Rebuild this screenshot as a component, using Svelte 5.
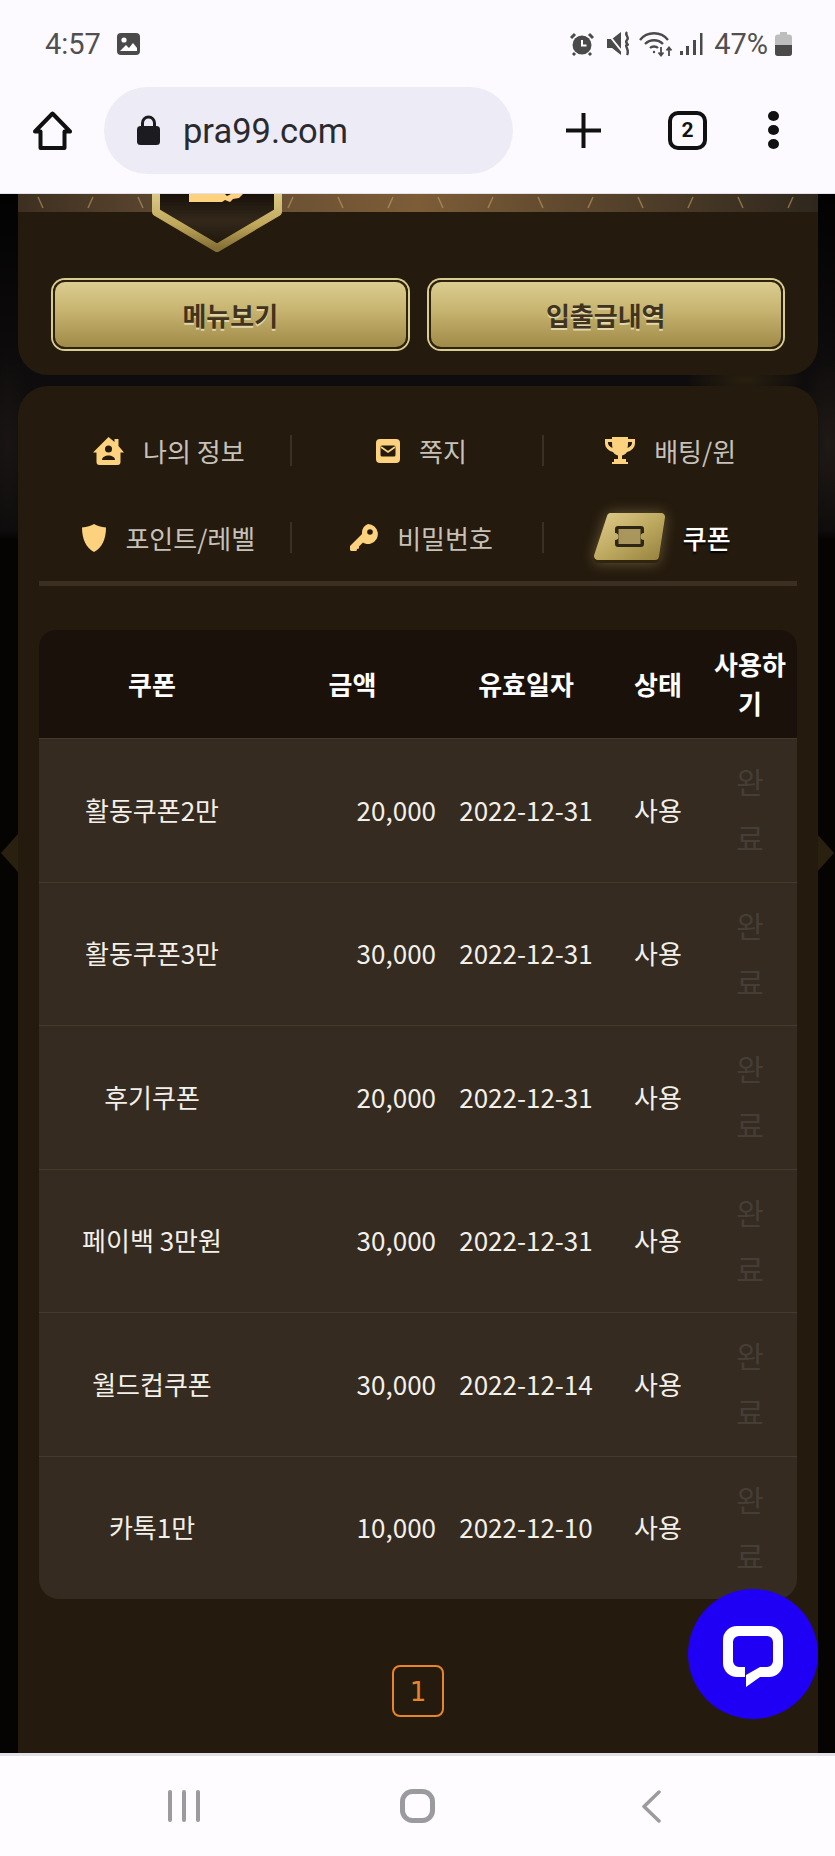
<script>
  const coupons = [
    { name: "활동쿠폰2만", amount: "20,000", date: "2022-12-31" },
    { name: "활동쿠폰3만", amount: "30,000", date: "2022-12-31" },
    { name: "후기쿠폰", amount: "20,000", date: "2022-12-31" },
    { name: "페이백 3만원", amount: "30,000", date: "2022-12-31" },
    { name: "월드컵쿠폰", amount: "30,000", date: "2022-12-14" },
    { name: "카톡1만", amount: "10,000", date: "2022-12-10" },
  ];
</script>

<div class="phone">
  <header class="status">
    <div class="status-left">
      <span>4:57</span>
      <svg width="23" height="22" viewBox="0 0 23 22">
        <rect width="23" height="22" rx="4" fill="#4a4a4a" />
        <circle cx="7" cy="7" r="2.6" fill="#fff" />
        <path d="M3 18l6-6 3 3 4-5 4 5v3H3z" fill="#fff" />
      </svg>
    </div>
    <div class="status-right">
      <svg width="24" height="24" viewBox="0 0 24 24">
        <circle cx="12" cy="13" r="9.500" fill="#4a4a4a" />
        <path d="M12 8v5.500h4.500" stroke="#fff" stroke-width="2" fill="none" />
        <path d="M1 6l4-4M23 6l-4-4M5 21l-2 2M19 21l2 2" stroke="#4a4a4a" stroke-width="3" />
      </svg>
      <svg width="25" height="25" viewBox="0 0 25 25">
        <path d="M0 8h5l9-7v23l-9-7H0z" fill="#4a4a4a" />
        <path d="M1 3l16 20" stroke="#fdfaff" stroke-width="2" />
        <path d="M20 1c-3 3 3 5 0 8s3 5 0 5 3 5 0 10" stroke="#4a4a4a" stroke-width="2.400" fill="none" />
      </svg>
      <svg width="34" height="26" viewBox="0 0 34 26" fill="none" stroke="#4a4a4a" stroke-width="2.300">
        <path d="M1 9c7-9 21-9 28 0" />
        <path d="M6 13c5-5 13-5 18 0" />
        <path d="M11 17c2-2 6-2 8 0" />
        <circle cx="15" cy="21" r="1.200" fill="#4a4a4a" stroke="none" />
        <path d="M22 16v8M19.500 21.500l2.500 3 2.500-3M30 25v-8M27.500 19.500l2.500-3 2.500 3" stroke-width="1.800" />
      </svg>
      <svg width="23" height="24" viewBox="0 0 23 24" fill="#4a4a4a">
        <rect x="0" y="19" width="3" height="4" />
        <rect x="6" y="14" width="3" height="9" />
        <rect x="13" y="8" width="3" height="15" />
        <rect x="20" y="1" width="2.500" height="22" />
      </svg>
      <span class="pct">47%</span>
      <svg width="17" height="24" viewBox="0 0 17 24">
        <path d="M5 0h7v2.500h2a3 3 0 0 1 3 3V21a3 3 0 0 1-3 3H3a3 3 0 0 1-3-3V5.500a3 3 0 0 1 3-3h2z" fill="#bdbdbd" />
        <path d="M0 13h17v8a3 3 0 0 1-3 3H3a3 3 0 0 1-3-3z" fill="#4a4a4a" />
      </svg>
    </div>
  </header>

  <nav class="toolbar">
    <svg class="home" width="39" height="39" viewBox="0 0 39 39" fill="none" stroke="#111" stroke-width="4" stroke-linejoin="round">
      <path d="M19.500 2.500L37 20.500h-5.500V37h-24V20.500H2z" />
    </svg>
    <div class="url">
      <svg width="23" height="30" viewBox="0 0 23 30">
        <path d="M5.500 13V8a6 6 0 0 1 12 0v5" fill="none" stroke="#1c1c20" stroke-width="3" />
        <rect y="11" width="23" height="19" rx="3.500" fill="#1c1c20" />
      </svg>
      <span>pra99.com</span>
    </div>
    <svg class="plus" width="35" height="35" viewBox="0 0 35 35">
      <path d="M17.500 0v35M0 17.500h35" stroke="#111" stroke-width="4" />
    </svg>
    <div class="tabs-count">2</div>
    <div class="dots"><i></i><i></i><i></i></div>
  </nav>

  <main class="content">
    <i class="arrow left"></i>
    <i class="arrow right"></i>

    <section class="panel top">
      <svg class="strip" width="800" height="18" viewBox="0 0 800 18" preserveAspectRatio="none">
        <defs>
          <linearGradient id="stripBg">
            <stop offset="0" stop-color="#3d2f20" />
            <stop offset="0.18" stop-color="#5c4630" />
            <stop offset="0.5" stop-color="#7d5d38" />
            <stop offset="0.8" stop-color="#4d3c28" />
            <stop offset="1" stop-color="#2f271d" />
          </linearGradient>
          <pattern id="stripGlint" width="100" height="18" patternUnits="userSpaceOnUse">
            <path d="M20 3l5 11M75 3l-5 11" stroke="#c9a566" stroke-width="1.500" opacity="0.55" />
          </pattern>
        </defs>
        <rect width="800" height="18" fill="url(#stripBg)" />
        <rect width="800" height="18" fill="url(#stripGlint)" />
      </svg>
      <svg class="badge" width="132" height="60" viewBox="0 0 132 60">
        <defs>
          <linearGradient id="badgeEdge" x1="0" y1="0" x2="0" y2="1">
            <stop offset="0" stop-color="#e0cf8c" />
            <stop offset="0.6" stop-color="#c0a85c" />
            <stop offset="1" stop-color="#857035" />
          </linearGradient>
          <linearGradient id="badgeFill" x1="0" y1="0" x2="0" y2="1">
            <stop offset="0" stop-color="#120c07" />
            <stop offset="0.55" stop-color="#33281a" />
            <stop offset="1" stop-color="#1c140b" />
          </linearGradient>
        </defs>
        <path d="M5-6V18L66 54 127 18V-6" fill="url(#badgeFill)" stroke="url(#badgeEdge)" stroke-width="8" stroke-linejoin="round" />
        <path d="M38 0h36l2 2 4-2h12l-4 4-6 1-3 3-5-2-3 2H38z" fill="#fdd27f" />
      </svg>
      <div class="top-actions">
        <button>메뉴보기</button>
        <button>입출금내역</button>
      </div>
    </section>

    <section class="panel bottom">
      <div class="tabs">
        <div class="tab">
          <svg width="31" height="28" viewBox="0 0 31 28">
            <path d="M15.500 0l6 5V2h4v7l5.500 6.500h-3.500V25a3 3 0 0 1-3 3h-18a3 3 0 0 1-3-3v-9.500H0z" fill="#fdd27f" />
            <circle cx="15.500" cy="12" r="3.500" fill="#241a0d" />
            <path d="M9 23c0-6 13-6 13 0z" fill="#241a0d" />
          </svg>
          <span>나의 정보</span>
        </div>
        <div class="tab">
          <svg width="24" height="24" viewBox="0 0 24 24">
            <rect width="24" height="24" rx="4" fill="#fdd27f" />
            <rect x="4.500" y="6.500" width="15" height="11" rx="1.500" fill="#241a0d" />
            <path d="M5 8l7 5 7-5" fill="none" stroke="#fdd27f" stroke-width="1.800" />
          </svg>
          <span>쪽지</span>
        </div>
        <div class="tab">
          <svg width="30" height="27" viewBox="0 0 30 27">
            <path d="M7 0h16v2h7v4c0 5-4 8-8 9-1 2-3 3-5 3.500V22h4v3h2v2H7v-2h2v-3h4v-3.500c-2-.5-4-1.500-5-3.500-4-1-8-4-8-9V2h7zM3 5v1c0 2 2 4 4.500 5C7 9 7 7 7 5zm24 0h-4c0 2 0 4-.5 6C25 10 27 8 27 6z" fill="#fdd27f" />
          </svg>
          <span>배팅/윈</span>
        </div>
        <div class="tab">
          <svg width="24" height="28" viewBox="0 0 24 28">
            <path d="M12 0c3 2 7 3 12 3.500C24 15 20 24 12 28 4 24 0 15 0 3.500 5 3 9 2 12 0z" fill="#fdd27f" />
          </svg>
          <span>포인트/레벨</span>
        </div>
        <div class="tab">
          <svg width="28" height="27" viewBox="0 0 28 27">
            <path d="M18 0a10 10 0 0 1 3 19.500c-3 1-6 .5-8-1L9 22.500v2l-2 .5-.5 2H1l-1-1v-4l12-12A10 10 0 0 1 18 0z" fill="#fdd27f" />
            <circle cx="20" cy="8" r="2.800" fill="#241a0d" />
          </svg>
          <span>비밀번호</span>
        </div>
        <div class="tab active">
          <svg class="ticket" width="71" height="50" viewBox="0 0 71 50">
            <defs>
              <linearGradient id="ticketFill" x1="0" y1="0" x2="1" y2="1">
                <stop offset="0" stop-color="#e2cf8e" />
                <stop offset="0.55" stop-color="#bba65d" />
                <stop offset="1" stop-color="#94803d" />
              </linearGradient>
            </defs>
            <path d="M13 3a4 4 0 0 1 4-3h50a4 4 0 0 1 4 4.500l-6 41a4 4 0 0 1-4 3.500H4a4 4 0 0 1-4-4.500z" fill="#2f2510" transform="translate(0 1)" />
            <path d="M13 3a4 4 0 0 1 4-3h50a4 4 0 0 1 4 4.500l-6 39a4 4 0 0 1-4 3.500H4a4 4 0 0 1-4-4.500z" fill="url(#ticketFill)" />
            <path d="M24 13h23a3 3 0 0 1 3 3v4a3 3 0 0 0 0 7v4a3 3 0 0 1-3 3H24a3 3 0 0 1-3-3v-4a3 3 0 0 0 0-7v-4a3 3 0 0 1 3-3z" fill="#2d2515" />
            <rect x="24.500" y="16" width="22" height="15" fill="#a8965c" />
          </svg>
          <span>쿠폰</span>
        </div>
      </div>

      <div class="coupons">
        <div class="row head">
          <div>쿠폰</div>
          <div>금액</div>
          <div>유효일자</div>
          <div>상태</div>
          <div>사용하기</div>
        </div>
        {#each coupons as c}
          <div class="row">
            <div>{c.name}</div>
            <div class="amount">{c.amount}</div>
            <div>{c.date}</div>
            <div>사용</div>
            <div><span class="done">완료</span></div>
          </div>
        {/each}
      </div>

      <div class="pager"><span>1</span></div>
    </section>

    <button class="chat" aria-label="chat">
      <svg width="60" height="61" viewBox="0 0 60 61">
        <path d="M22 51H14A14 14 0 0 1 0 37V14A14 14 0 0 1 14 0H46A14 14 0 0 1 60 14V37A14 14 0 0 1 46 51H37L23 61V49L37 41H44A6 6 0 0 0 50 35V16A6 6 0 0 0 44 10H16A6 6 0 0 0 10 16V35A6 6 0 0 0 16 41H22Z" fill="#fff" />
      </svg>
    </button>
  </main>

  <footer class="navbar">
    <svg width="32" height="32" viewBox="0 0 32 32" fill="#9b9b9f">
      <rect x="0" width="4" height="32" rx="2" />
      <rect x="14" width="4" height="32" rx="2" />
      <rect x="28" width="4" height="32" rx="2" />
    </svg>
    <svg width="35" height="34" viewBox="0 0 35 34">
      <rect x="2.500" y="2.500" width="30" height="29" rx="10" fill="none" stroke="#9b9b9f" stroke-width="5" />
    </svg>
    <svg width="20" height="33" viewBox="0 0 20 33">
      <path d="M18 2L3 16.500 18 31" fill="none" stroke="#9b9b9f" stroke-width="3.500" stroke-linecap="round" stroke-linejoin="round" />
    </svg>
  </footer>
</div>

<style>
  :global(body) {
    background: #060403;
  }
  .phone {
    width: 835px;
    height: 1856px;
    display: flex;
    flex-direction: column;
    overflow: hidden;
    font-family: "Noto Sans CJK KR", "Noto Sans", sans-serif;
  }

  .status {
    height: 75px;
    flex: none;
    background: #fdfaff;
    display: flex;
    justify-content: space-between;
    align-items: center;
    padding: 12px 43px 0 45px;
    box-sizing: border-box;
    color: #505050;
    font-family: Roboto, sans-serif;
    font-size: 29px;
  }
  .status-left {
    display: flex;
    align-items: center;
    gap: 16px;
  }
  .status-right {
    display: flex;
    align-items: center;
    gap: 7px;
  }
  .status-right svg:first-child {
    margin-right: 6px;
  }
  .pct {
    margin-left: 4px;
  }

  .toolbar {
    height: 119px;
    flex: none;
    background: #fdfaff;
    border-bottom: 1px solid #e4e1ea;
    box-sizing: border-box;
    display: flex;
    align-items: center;
    padding: 0 0 8px 33px;
  }
  .url {
    width: 409px;
    height: 87px;
    border-radius: 44px;
    background: #edecf6;
    margin-left: 32px;
    display: flex;
    align-items: center;
    gap: 23px;
    padding-left: 33px;
    box-sizing: border-box;
    font-family: Roboto, sans-serif;
    font-size: 34.500px;
    color: #2a2a2e;
  }
  .url span {
    padding-top: 2px;
  }
  .plus {
    margin-left: 53px;
  }
  .tabs-count {
    width: 39px;
    height: 39px;
    margin-left: 67px;
    border: 4px solid #111;
    border-radius: 10px;
    box-sizing: border-box;
    display: flex;
    align-items: center;
    justify-content: center;
    font-family: Roboto, sans-serif;
    font-weight: 700;
    font-size: 21px;
    color: #111;
  }
  .dots {
    margin-left: 61px;
    display: flex;
    flex-direction: column;
    gap: 4px;
  }
  .dots i {
    width: 11px;
    height: 10px;
    border-radius: 50%;
    background: #111;
  }

  .content {
    flex: 1;
    position: relative;
    padding: 0 17px 0 18px;
    background:
      radial-gradient(ellipse 60px 20px at 745px 186px, #2a2010 0, transparent 100%),
      radial-gradient(ellipse 26px 90px at 8px 250px, #1a1514 0, transparent 100%),
      radial-gradient(ellipse 30px 90px at 828px 250px, #201a16 0, transparent 100%),
      linear-gradient(180deg, #030202 0, #0e0c0c 180px, #0e0c0c 336px, #060403 345px, #060403 100%);
    overflow: hidden;
  }
  .arrow {
    position: absolute;
    top: 640px;
    width: 17px;
    height: 38px;
    background: #2a2010;
  }
  .arrow.left {
    left: 1px;
    clip-path: polygon(100% 0, 100% 100%, 0 50%);
  }
  .arrow.right {
    right: 1px;
    clip-path: polygon(0 0, 100% 50%, 0 100%);
  }

  .panel {
    background: #241a0d;
    position: relative;
  }
  .top {
    height: 181px;
    border-radius: 0 0 30px 30px;
    box-sizing: border-box;
  }
  .strip {
    display: block;
  }
  .badge {
    position: absolute;
    top: 0;
    left: 133px;
  }
  .top-actions {
    display: grid;
    grid-template-columns: 1fr 1fr;
    gap: 21px;
    padding: 68px 35px 0;
  }
  .top-actions button {
    height: 69px;
    border: 2px solid #2c2210;
    border-radius: 12px;
    box-shadow: 0 0 0 2px #d9cc90;
    background: linear-gradient(180deg, #dccd90 0%, #c6b36f 45%, #a08a48 100%);
    font-family: inherit;
    font-size: 26px;
    font-weight: 700;
    color: #40341e;
    text-shadow: 0 2px 0 #e2d6a8;
    padding: 0;
  }

  .bottom {
    margin-top: 11px;
    border-radius: 30px 30px 0 0;
    padding: 21px 21px 0;
    height: 1367px;
    box-sizing: border-box;
  }
  .tabs {
    display: grid;
    grid-template-columns: repeat(3, 1fr);
    grid-auto-rows: 87px;
    border-bottom: 5px solid #3a2f20;
  }
  .tab {
    position: relative;
    display: flex;
    align-items: center;
    justify-content: center;
    gap: 19px;
    font-size: 26px;
    color: #c6c2ba;
  }
  .tab:not(:nth-child(3n)) {
    padding-left: 7px;
  }
  .tab:not(:nth-child(3n))::after {
    content: "";
    position: absolute;
    right: 0;
    top: 28px;
    width: 2px;
    height: 31px;
    background: #3a3023;
  }
  .tab.active {
    gap: 18px;
    padding-right: 17px;
    color: #fff;
    font-weight: 500;
    text-shadow: 0 2px 2px #000;
  }
  .ticket {
    filter: drop-shadow(0 0 7px rgba(228, 205, 135, 0.35));
  }

  .coupons {
    margin-top: 44px;
    border-radius: 16px 16px 20px 20px;
    overflow: hidden;
    background: #352b20;
    color: #f3f0ea;
    font-size: 26px;
  }
  .row {
    display: grid;
    grid-template-columns: 226px 175px 172px 92px 92px;
    height: 143.5px;
    box-sizing: border-box;
    border-top: 1px solid #453a2c;
    text-align: center;
    align-items: center;
    line-height: 39px;
    padding-bottom: 2px;
  }
  .head {
    height: 108px;
    border-top: 0;
    background: #1a120a;
    font-weight: 700;
    color: #fff;
  }
  .head > div {
    word-break: break-all;
  }
  .row > .amount {
    text-align: right;
    padding-right: 4px;
  }
  .done {
    display: block;
    width: 32px;
    margin: 0 auto;
    word-break: break-all;
    font-size: 30px;
    line-height: 56px;
    color: #453e36;
  }

  .pager {
    margin-top: 66px;
    display: flex;
    justify-content: center;
  }
  .pager span {
    width: 52px;
    height: 52px;
    box-sizing: border-box;
    border: 2px solid #e8842a;
    border-radius: 8px;
    padding-top: 2px;
    display: flex;
    align-items: center;
    justify-content: center;
    color: #e8842a;
    font-family: "DejaVu Sans", sans-serif;
    font-size: 26px;
  }

  .chat {
    position: absolute;
    left: 688px;
    top: 1395px;
    width: 130px;
    height: 130px;
    border: 0;
    border-radius: 50%;
    background: #2000f5;
    padding: 5px 0 0 0;
    display: flex;
    align-items: center;
    justify-content: center;
  }

  .navbar {
    height: 103px;
    flex: none;
    background: #fefcff;
    border-top: 3px solid #e1dfe8;
    box-sizing: border-box;
    display: grid;
    grid-template-columns: repeat(3, 233.500px);
    justify-items: center;
    align-items: center;
    padding-left: 67px;
  }
</style>
